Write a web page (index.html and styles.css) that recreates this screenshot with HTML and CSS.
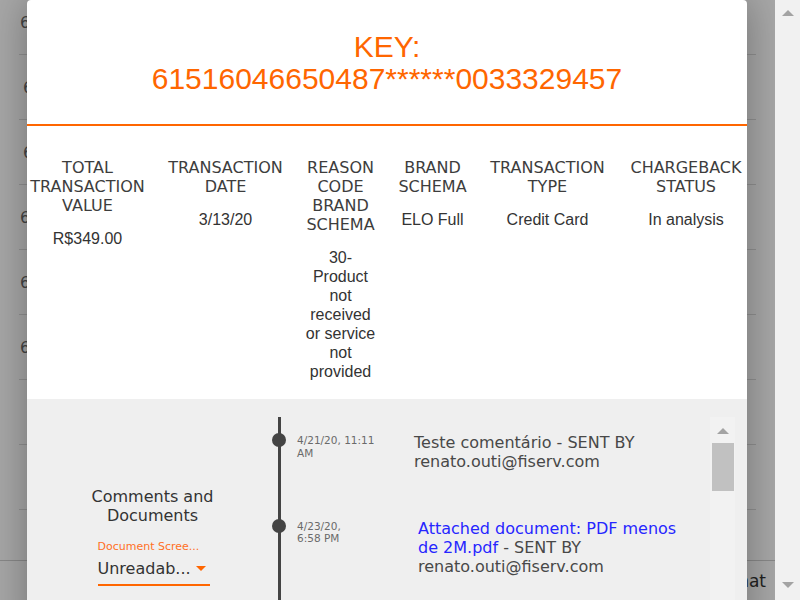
FILE: index.html
```html
<!DOCTYPE html>
<html lang="en">
<head>
<meta charset="utf-8">
<title>Chargeback details</title>
<link rel="stylesheet" href="styles.css">
</head>
<body>
<div class="screen">
  <div class="page">
    <div class="rows">
      <div class="row"><span class="cell">6</span></div>
      <div class="row"><span class="cell shift">6</span></div>
      <div class="row"><span class="cell shift">6</span></div>
      <div class="row"><span class="cell">6</span></div>
      <div class="row"><span class="cell">6</span></div>
      <div class="row"><span class="cell">6</span></div>
      <div class="row"></div>
      <div class="row"></div>
      <div class="row"></div>
    </div>
    <div class="footer"><span>Chat</span></div>
    <div class="overlay"></div>
    <div class="modal">
      <div class="modal-head">
        <div>KEY:</div>
        <div>61516046650487******0033329457</div>
      </div>
      <div class="summary">
        <div class="col">
          <div class="th">TOTAL TRANSACTION VALUE</div>
          <div class="td">R$349.00</div>
        </div>
        <div class="col">
          <div class="th">TRANSACTION DATE</div>
          <div class="td">3/13/20</div>
        </div>
        <div class="col">
          <div class="th">REASON CODE BRAND SCHEMA</div>
          <div class="td">30- Product not received or service not provided</div>
        </div>
        <div class="col">
          <div class="th">BRAND SCHEMA</div>
          <div class="td">ELO Full</div>
        </div>
        <div class="col">
          <div class="th">TRANSACTION TYPE</div>
          <div class="td">Credit Card</div>
        </div>
        <div class="col">
          <div class="th">CHARGEBACK STATUS</div>
          <div class="td">In analysis</div>
        </div>
      </div>
      <div class="details">
        <div class="side">
          <div class="side-title">Comments and Documents</div>
          <div class="field">
            <div class="field-label">Document Scree...</div>
            <div class="select"><span>Unreadab...</span><span class="caret"></span></div>
          </div>
        </div>
        <div class="tl-box">
          <div class="timeline">
            <div class="item">
              <div class="date">4/21/20, 11:11<br>AM</div>
              <div class="comment">Teste comentário - SENT BY renato.outi@fiserv.com</div>
            </div>
            <div class="item">
              <div class="date">4/23/20,<br>6:58 PM</div>
              <div class="comment doc"><a class="link">Attached document: PDF menos de 2M.pdf</a> - SENT BY renato.outi@fiserv.com</div>
            </div>
          </div>
          <div class="tl-scroll">
            <span class="tl-up"></span>
            <span class="tl-thumb"></span>
          </div>
        </div>
      </div>
    </div>
  </div>
  <div class="vscroll">
    <span class="up"></span>
    <span class="down"></span>
  </div>
</div>
</body>
</html>
```
FILE: styles.css
```css
* { box-sizing: border-box; }
html, body { margin: 0; padding: 0; }
body {
  width: 800px;
  height: 600px;
  overflow: hidden;
  font-family: "DejaVu Sans", sans-serif;
  background: #fff;
}
.screen {
  display: flex;
  width: 800px;
  height: 600px;
}
.page {
  position: relative;
  width: 775px;
  height: 600px;
  overflow: hidden;
  background: #fff;
}
.rows {
  margin-top: -10px;
  padding: 0 19px;
}
.row {
  height: 65px;
  border-bottom: 1px solid #dcdcdc;
  display: flex;
  align-items: center;
  padding-left: 1px;
  font-size: 16px;
  color: #6a6a6a;
}
.cell.shift {
  padding-left: 3px;
}
.footer {
  position: absolute;
  left: 0;
  right: 0;
  bottom: 0;
  height: 40px;
  border-top: 1px solid #d0d0d0;
  background: #fff;
  display: flex;
  align-items: center;
  justify-content: flex-end;
  padding-right: 9px;
  font-size: 17px;
  color: #333;
}
.overlay {
  position: absolute;
  inset: 0;
  background: rgba(0, 0, 0, 0.345);
}
.modal {
  position: absolute;
  left: 27px;
  top: 0;
  width: 720px;
  height: 640px;
  background: #fff;
  border-radius: 4px 4px 0 0;
  box-shadow: 0 0 40px rgba(0, 0, 0, 0.32);
  overflow: hidden;
  display: flex;
  flex-direction: column;
}
.modal-head {
  padding: 31px 0 30px;
  text-align: center;
  color: #ff6600;
  font-family: "Liberation Sans", Arial, sans-serif;
  font-size: 30px;
  line-height: 31.5px;
  border-bottom: 2px solid #ff6600;
}
.summary {
  display: grid;
  grid-template-columns: 118px 118px 72px 72px 118px 119px;
  column-gap: 20px;
  justify-content: center;
  align-items: start;
  padding: 31.5px 0 18.5px;
}
.col {
  display: flex;
  flex-direction: column;
  text-align: center;
}
.th {
  font-family: "DejaVu Sans", sans-serif;
  font-size: 16px;
  line-height: 19px;
  color: #3d3d3d;
}
.td {
  margin-top: 14px;
  font-family: "Liberation Sans", Arial, sans-serif;
  font-size: 16px;
  line-height: 19px;
  color: #333;
}
.details {
  flex: 1;
  display: flex;
  background: #efefef;
  padding-top: 18px;
}
.side {
  width: 251px;
  padding-top: 69.5px;
  text-align: center;
}
.side-title {
  width: 150px;
  margin: 0 auto;
  font-size: 16px;
  line-height: 19px;
  color: #333;
}
.field {
  width: 112px;
  margin: 15.5px auto 0;
  text-align: left;
  position: relative;
  left: 1px;
}
.field-label {
  font-size: 11px;
  line-height: 14px;
  color: #ff6f1f;
  white-space: nowrap;
}
.select {
  margin-top: 4.5px;
  display: flex;
  justify-content: space-between;
  align-items: center;
  padding-bottom: 6.5px;
  border-bottom: 2px solid #ff6600;
  font-size: 16px;
  line-height: 19px;
  color: #333;
  white-space: nowrap;
}
.caret {
  width: 0;
  height: 0;
  border-left: 5px solid transparent;
  border-right: 5px solid transparent;
  border-top: 5px solid #ff6600;
  margin-right: 4px;
}
.tl-box {
  flex: 1;
  display: flex;
  margin-right: 12px;
}
.timeline {
  flex: 1;
  border-left: 3px solid #444;
  padding-top: 16px;
}
.item {
  position: relative;
  display: flex;
  align-items: flex-start;
  margin-bottom: 47.5px;
}
.item::before {
  content: "";
  position: absolute;
  left: -9px;
  top: 0;
  width: 14px;
  height: 14px;
  border-radius: 50%;
  background: #444;
}
.date {
  width: 133px;
  flex: none;
  padding-left: 16px;
  padding-top: 1px;
  font-size: 10.5px;
  line-height: 12.7px;
  color: #6a6a6a;
}
.comment {
  width: 272px;
  font-size: 16px;
  line-height: 19px;
  color: #484848;
}
.comment.doc {
  margin-left: 4px;
}
.link {
  color: #2626ff;
}
.tl-scroll {
  width: 25px;
  flex: none;
  background: #f2f2f2;
  display: flex;
  flex-direction: column;
  align-items: center;
  padding-top: 11px;
}
.tl-up {
  width: 0;
  height: 0;
  border-left: 6px solid transparent;
  border-right: 6px solid transparent;
  border-bottom: 6px solid #a3a3a3;
}
.tl-thumb {
  margin-top: 9px;
  width: 22px;
  height: 48px;
  background: #c1c1c1;
}
.vscroll {
  width: 25px;
  height: 600px;
  background: #f1f1f1;
  display: flex;
  flex-direction: column;
  justify-content: space-between;
  align-items: center;
  padding: 10px 0 12px;
}
.vscroll .up {
  width: 0;
  height: 0;
  border-left: 6px solid transparent;
  border-right: 6px solid transparent;
  border-bottom: 6px solid #a3a3a3;
}
.vscroll .down {
  width: 0;
  height: 0;
  border-left: 6px solid transparent;
  border-right: 6px solid transparent;
  border-top: 6px solid #a3a3a3;
}
```
